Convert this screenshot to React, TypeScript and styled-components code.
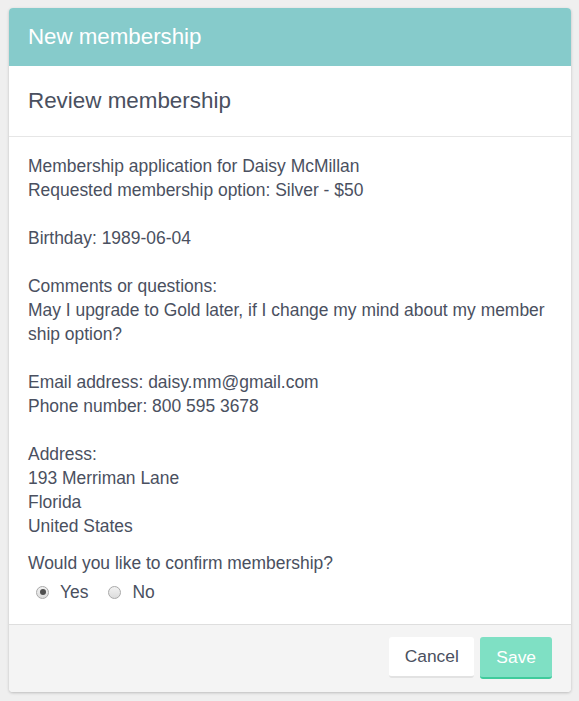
import React from "react";
import styled, { createGlobalStyle } from "styled-components";

const Global = createGlobalStyle`
  html, body { margin: 0; padding: 0; }
  body {
    background: #efefef;
    font-family: "Liberation Sans", Arial, sans-serif;
  }
`;

const Page = styled.div`
  padding: 8px 8px 8px 9px;
  width: 562px;
`;

const Card = styled.div`
  background: #fff;
  border-radius: 4px;
  overflow: hidden;
  box-shadow: 0 1px 3px rgba(0, 0, 0, 0.22);
`;

const Header = styled.div`
  height: 58px;
  background: #86cbcb;
  color: #fff;
  font-size: 22.3px;
  display: flex;
  align-items: center;
  padding: 0 19px;
`;

const SubHeader = styled.div`
  height: 70px;
  border-bottom: 1px solid #e6e6e6;
  color: #4a5060;
  font-size: 22.4px;
  display: flex;
  align-items: center;
  padding: 0 19px;
`;

const Body = styled.div`
  padding: 17px 19px 20px;
  color: #4a5060;
  font-size: 17.45px;
  line-height: 24px;
`;

const Line = styled.div<{ $gap?: boolean }>`
  margin-bottom: ${(p) => (p.$gap ? "24px" : "0")};
`;

const Question = styled.div`
  margin-top: 13px;
`;

const RadioRow = styled.div`
  display: flex;
  align-items: center;
  gap: 20px;
  margin-top: 5px;
  padding-left: 8px;
`;

const RadioLabel = styled.label`
  display: flex;
  align-items: center;
  gap: 11px;
`;

const RadioDot = styled.span<{ $checked?: boolean }>`
  width: 13px;
  height: 13px;
  box-sizing: border-box;
  border-radius: 50%;
  border: 1px solid #a9a9a9;
  background: linear-gradient(#f2f2f2, #dcdcdc);
  display: inline-flex;
  align-items: center;
  justify-content: center;
  &::after {
    content: "";
    width: 6px;
    height: 6px;
    border-radius: 50%;
    background: #4f4f4f;
    display: ${(p) => (p.$checked ? "block" : "none")};
  }
`;

const Footer = styled.div`
  background: #f4f4f4;
  border-top: 1px solid #dedede;
  height: 68px;
  padding: 12px 19px 0;
  box-sizing: border-box;
  display: flex;
  justify-content: flex-end;
  align-items: flex-start;
  gap: 6px;
`;

const Button = styled.button<{ $primary?: boolean }>`
  font-family: "Liberation Sans", Arial, sans-serif;
  font-size: 17.4px;
  height: ${(p) => (p.$primary ? "42px" : "41px")};
  padding: 0 ${(p) => (p.$primary ? "16px" : "15.5px")};
  border: none;
  border-radius: 3px;
  border-bottom: 2px solid ${(p) => (p.$primary ? "#3fcb9c" : "#e2e2e2")};
  background: ${(p) => (p.$primary ? "#7fe0c4" : "#fff")};
  color: ${(p) => (p.$primary ? "#fff" : "#4a5060")};
  cursor: pointer;
`;

export default function App() {
  return (
    <>
      <Global />
      <Page>
        <Card>
          <Header>New membership</Header>
          <SubHeader>Review membership</SubHeader>
          <Body>
            <Line>Membership application for Daisy McMillan</Line>
            <Line $gap>Requested membership option: Silver - $50</Line>
            <Line $gap>Birthday: 1989-06-04</Line>
            <Line>Comments or questions:</Line>
            <Line $gap>
              May I upgrade to Gold later, if I change my mind about my member
              <br />
              ship option?
            </Line>
            <Line>Email address: daisy.mm@gmail.com</Line>
            <Line $gap>Phone number: 800 595 3678</Line>
            <Line>Address:</Line>
            <Line>193 Merriman Lane</Line>
            <Line>Florida</Line>
            <Line>United States</Line>
            <Question>Would you like to confirm membership?</Question>
            <RadioRow>
              <RadioLabel>
                <RadioDot $checked />
                Yes
              </RadioLabel>
              <RadioLabel>
                <RadioDot />
                No
              </RadioLabel>
            </RadioRow>
          </Body>
          <Footer>
            <Button>Cancel</Button>
            <Button $primary>Save</Button>
          </Footer>
        </Card>
      </Page>
    </>
  );
}
